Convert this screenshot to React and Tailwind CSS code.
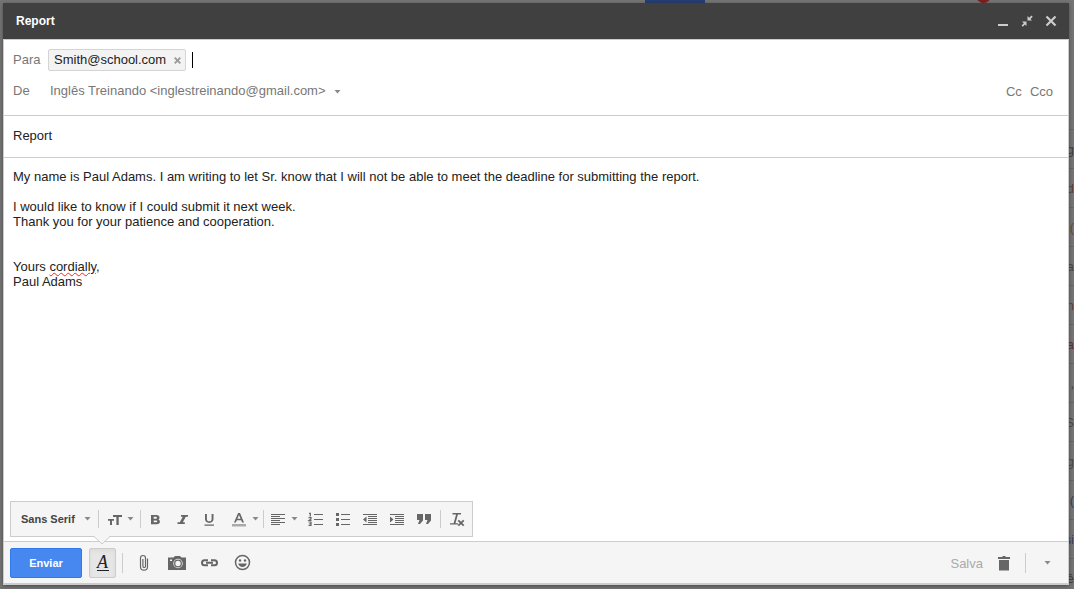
import { useState } from "react";

/**
 * Compose window — header, recipients, subject, message body,
 * formatting toolbar and the send bar, over a dimmed inbox.
 */

// Ends of the inbox rows that peek out beside the window.
const INBOX_ROWS = [
  { text: "g", color: "#3f3f3f" },
  { text: "d", color: "#5f4034" },
  { text: "(", color: "#6b4a35" },
  { text: "a", color: "#4a4a4a" },
  { text: "n", color: "#5f4034" },
  { text: "a", color: "#5a3434" },
  { text: ",", color: "#3f3f3f" },
  { text: "S", color: "#4a4a4a" },
  { text: "g", color: "#4f4a35" },
  { text: "(", color: "#3c3c5c" },
  { text: "si", color: "#3c3c5c" },
  { text: "cê", color: "#3f3f3f" },
];

const MESSAGE = [
  "My name is Paul Adams. I am writing to let Sr. know that I will not be able to meet the deadline for submitting the report.",
  "",
  "I would like to know if I could submit it next week.",
  "Thank you for your patience and cooperation.",
  "",
  "",
];

function Caret({ className = "" }) {
  return (
    <svg viewBox="0 0 7 4" className={`w-[7px] h-1 shrink-0 fill-[#888] ${className}`} aria-hidden="true">
      <path d="M.5 0h6L3.500 3.500z" />
    </svg>
  );
}

function Icon({ size = 18, children }) {
  return (
    <svg viewBox={`0 0 ${size} ${size}`} width={size} height={size} fill="currentColor" className="shrink-0" aria-hidden="true">
      {children}
    </svg>
  );
}

function Divider({ className = "h-4" }) {
  return <span className={`w-px shrink-0 bg-[#ccc] ${className}`} />;
}

function ToolButton({ label, className = "w-[27px]", children }) {
  return (
    <button type="button" aria-label={label} title={label} className={`h-full flex items-center justify-center shrink-0 cursor-pointer ${className}`}>
      {children}
    </button>
  );
}

const icons = {
  bold: <path fillRule="evenodd" d="M5 5h5.400c2 0 3.100 1 3.100 2.500 0 .9-.5 1.600-1.200 2 1 .4 1.600 1.100 1.600 2.200 0 1.600-1.200 2.500-3.200 2.500H5zm2.700 1.800v1.900h2c.8 0 1.200-.4 1.200-.95s-.4-.95-1.200-.95zm0 3.600v1.950h2.200c.9 0 1.300-.4 1.300-1s-.4-.95-1.300-.95z" />,
  italic: <path d="M8 5h7v1.800h-2.200l-3 5.400h2V14H4.500v-1.800h2.300l3-5.400H8z" />,
  underline: <path d="M5 4h1.900v5c0 1.500.8 2.300 2.350 2.300s2.350-.8 2.350-2.300V4h1.900v5.100c0 2.400-1.600 3.800-4.250 3.800S5 11.500 5 9.100zM4.500 14.500h9.500v1.300H4.500z" />,
  color: (
    <>
      <path fillRule="evenodd" d="M8.100 3h1.900l4 9.500h-1.900l-.9-2.300H6.800l-.9 2.300H4zm.9 2.100L7.400 8.700h3.200z" />
      <path fill="#aaa" d="M2 14h14v2.500H2z" />
    </>
  ),
  size: <path d="M7 5h9v2h-3.300v8h-2.300V7H7zM2 9h6v1.800H6V15H4v-4.200H2z" />,
  align: <path d="M2 4h14v1H2zM2 6h9v1H2zM2 8h14v1H2zM2 10h9v1H2zM2 12h14v1H2zM2 14h9v1H2z" />,
  numbered: (
    <>
      <path d="M7 4h9v1H7zM7 9h9v1H7zM7 14h9v1H7z" />
      <path fill="none" stroke="currentColor" strokeWidth="1.200" d="M2 3.300h1.300V6.500M1.500 7.700H4v1.200L2 10.500h2.500M1.500 12h2.500v3.300H1.500M2.500 13.600H4" />
    </>
  ),
  bulleted: <path d="M7 4h9v1H7zM7 9h9v1H7zM7 14h9v1H7zM2 3h3v3H2zM2 8h3v3H2zM2 13h3v3H2z" />,
  outdent: <path d="M2 4h14v1H2zM7 6h9v1H7zM7 8h9v1H7zM7 10h9v1H7zM7 12h9v1H7zM2 14h14v1H2zM2 9.500l3.500-3v6z" />,
  indent: <path d="M2 4h14v1H2zM7 6h9v1H7zM7 8h9v1H7zM7 10h9v1H7zM7 12h9v1H7zM2 14h14v1H2zM5.500 9.500L2 6.500v6z" />,
  quote: <path d="M2 4h6v6.500L5 14H3l1.500-4H2zM10 4h6v6.500L13 14h-2l1.500-4H10z" />,
  clear: (
    <>
      <path d="M4.500 3H13v1.500H9.900l-2.400 8.700H10v1.300H2v-1.300h3.600L8.100 4.500H4.500z" />
      <path fill="none" stroke="currentColor" strokeWidth="1.800" d="M10.300 10.300l5.400 5.400M15.700 10.300l-5.400 5.400" />
    </>
  ),
};

function FormatBar() {
  return (
    <div role="toolbar" aria-label="Formatação" className="relative flex items-center w-max h-9 bg-[#f5f5f5] border border-[#ccc] text-[#666]">
      <div className="relative w-[87px] flex items-center">
        <select aria-label="Fonte" className="appearance-none w-full h-6 pl-[10px] text-[11px] font-bold text-[#444] cursor-pointer">
          <option>Sans Serif</option>
          <option>Serif</option>
        </select>
        <Caret className="absolute right-[7px] pointer-events-none" />
      </div>
      <Divider className="h-[18px]" />
      <ToolButton label="Tamanho" className="w-[41px] gap-[3px]">
        <Icon>{icons.size}</Icon>
        <Caret />
      </ToolButton>
      <Divider className="h-[18px]" />
      <ToolButton label="Negrito"><Icon>{icons.bold}</Icon></ToolButton>
      <ToolButton label="Itálico"><Icon>{icons.italic}</Icon></ToolButton>
      <ToolButton label="Sublinhado"><Icon>{icons.underline}</Icon></ToolButton>
      <ToolButton label="Cor do texto" className="w-[41px] gap-1 pl-1">
        <Icon>{icons.color}</Icon>
        <Caret />
      </ToolButton>
      <Divider className="h-[18px]" />
      <ToolButton label="Alinhar" className="w-[38px] gap-1">
        <Icon>{icons.align}</Icon>
        <Caret />
      </ToolButton>
      <ToolButton label="Lista numerada"><Icon>{icons.numbered}</Icon></ToolButton>
      <ToolButton label="Lista com marcadores"><Icon>{icons.bulleted}</Icon></ToolButton>
      <ToolButton label="Menos recuo"><Icon>{icons.outdent}</Icon></ToolButton>
      <ToolButton label="Mais recuo"><Icon>{icons.indent}</Icon></ToolButton>
      <ToolButton label="Citação"><Icon>{icons.quote}</Icon></ToolButton>
      <Divider className="h-[18px] ml-[3px]" />
      <ToolButton label="Remover formatação" className="w-[31px]"><Icon>{icons.clear}</Icon></ToolButton>

      {/* pointer towards the formatting button */}
      <svg viewBox="0 0 16 9" className="absolute left-[83px] top-[34px] w-4 h-[9px] z-10" aria-hidden="true">
        <path fill="#f5f5f5" d="M0 0h16L8 8z" />
        <path fill="none" stroke="#ccc" d="M0 .5l8 7.500 8-7.500" />
      </svg>
    </div>
  );
}

function SendBar() {
  return (
    <div className="flex items-center h-[42px] shrink-0 pl-[6px] bg-[#f5f5f5] border-t border-[#ccc] text-[#666]">
      <button type="submit" className="w-[72px] h-[30px] pt-px rounded-xs border border-[#3079ed] bg-[#4788f0] text-white text-[11px] font-bold cursor-pointer">
        Enviar
      </button>
      <button type="button" aria-label="Opções de formatação" aria-pressed="true" className="ml-[7px] w-[27px] h-[30px] rounded-xs border border-[#ccc] bg-[#e6e6e6] shadow-inner flex items-center justify-center cursor-pointer">
        <span className="font-['Liberation_Serif',serif] italic text-lg leading-4 w-3 text-center text-[#222] border-b border-[#222]">A</span>
      </button>
      <Divider className="h-5 ml-[6px] mr-1" />
      <ToolButton label="Anexar arquivos" className="w-[33px]">
        <Icon size={20}>
          <path fill="none" stroke="currentColor" strokeWidth="1.200" d="M13.500 5.500v8.200a3.500 3.500 0 0 1-7 0V5a2.500 2.500 0 0 1 5 0v8.200a1.300 1.300 0 0 1-2.600 0V6" />
        </Icon>
      </ToolButton>
      <ToolButton label="Inserir foto" className="w-[33px]">
        <Icon size={20}>
          <path fillRule="evenodd" d="M1 4.500h5.500L8 3h5l1.500 1.500H19V17H1zm10 1.300a4.700 4.700 0 1 0 0 9.400 4.700 4.700 0 0 0 0-9.400zM3 6.500V8h2V6.500z" />
          <circle cx="11" cy="10.500" r="3.300" fill="none" stroke="currentColor" strokeWidth="1.300" />
        </Icon>
      </ToolButton>
      <ToolButton label="Inserir link" className="w-[33px]">
        <Icon size={20}>
          <path fill="none" stroke="currentColor" strokeWidth="2" d="M8 7.300H4.500a2.500 2.500 0 0 0 0 5H8M11 7.300h3.500a2.500 2.500 0 0 1 0 5H11M6 9.800h7" />
        </Icon>
      </ToolButton>
      <ToolButton label="Inserir emoticon" className="w-[33px]">
        <Icon size={20}>
          <circle cx="9.500" cy="9.500" r="7" fill="none" stroke="currentColor" strokeWidth="1.500" />
          <circle cx="7" cy="7.500" r="1.200" />
          <circle cx="12" cy="7.500" r="1.200" />
          <path d="M5.200 10.500h8.600c-.5 2.200-2.200 3.500-4.300 3.500s-3.800-1.300-4.300-3.500z" />
        </Icon>
      </ToolButton>

      <span className="ml-auto pt-px text-[#aaa]">Salva</span>
      <ToolButton label="Descartar rascunho" className="w-[42px]">
        <Icon>
          <path d="M3 3h4l1-1h2l1 1h4v2H3zM4 6h10v10.500H4z" />
        </Icon>
      </ToolButton>
      <Divider className="h-5" />
      <ToolButton label="Mais opções" className="w-[42px]">
        <Caret />
      </ToolButton>
    </div>
  );
}

export default function App() {
  const [to, setTo] = useState("");
  const [subject, setSubject] = useState("Report");

  return (
    <div className="relative h-screen overflow-hidden flex p-[3px] pr-[5px] pb-1 bg-[#757575] font-['Liberation_Sans',Arial,sans-serif] text-[13px] leading-[15px] text-[#222]">
      {/* dimmed inbox */}
      <div aria-hidden="true" className="absolute inset-0">
        <div className="absolute top-0 left-[645px] w-[60px] h-1 bg-[#263f73]" />
        <div className="absolute -top-3 right-[83px] size-[15px] rounded-full bg-[#7a2020]" />
        <div className="absolute top-[129px] right-0 w-6 text-right">
          {INBOX_ROWS.map((row, i) => (
            <div key={i} className="h-[39px] pt-3 border-t border-[#686868]" style={{ color: row.color }}>
              {row.text}
            </div>
          ))}
        </div>
      </div>

      <form onSubmit={(e) => e.preventDefault()} className="relative flex-1 min-w-0 flex flex-col bg-white shadow-[0_1px_4px_rgba(0,0,0,0.4)]">
        <header className="flex items-center h-9 shrink-0 pl-[13px] pr-[6px] bg-[#404040] text-[#ccc]">
          <h1 className="mr-auto text-[12px] font-bold text-white">Report</h1>
          <ToolButton label="Minimizar" className="w-6">
            <Icon size={12}><path d="M1 9h10v2H1z" /></Icon>
          </ToolButton>
          <ToolButton label="Sair da tela cheia" className="w-6">
            <Icon size={12}>
              <path d="M6.500 1v4.500H11L9.500 4l2.200-2.200-1.200-1.200L8.200 2.800zM1 6.500h4.500V11L4 9.500l-2.200 2.200-1.200-1.200L2.800 8.200z" />
            </Icon>
          </ToolButton>
          <ToolButton label="Fechar" className="w-6">
            <Icon size={12}><path fill="none" stroke="currentColor" strokeWidth="2.200" d="M1.500 1.500l9 9M10.500 1.500l-9 9" /></Icon>
          </ToolButton>
        </header>

        <div className="flex-1 min-h-0 flex flex-col border border-b-2 border-[#ccc]">
          <div className="pt-[9px] pb-3 pl-[9px] pr-[15px] text-[#777]">
            <div className="flex items-center">
              <label htmlFor="to" className="w-[35px] pb-[2px]">Para</label>
              <span className="flex items-center h-[22px] pl-[5px] pr-1 gap-2 rounded-xs border border-[#d4d4d4] bg-[#f3f3f3] text-[#222]">
                <span className="pb-[2px]">Smith@school.com</span>
                <button type="button" aria-label="Remover" className="text-[#999] cursor-pointer">
                  <svg viewBox="0 0 7 7" className="w-[7px] h-[7px]" fill="none" stroke="currentColor" strokeWidth="1.800" aria-hidden="true">
                    <path d="M.7.7l5.600 5.600M6.300.7L.7 6.300" />
                  </svg>
                </button>
              </span>
              <span className="ml-[6px] w-px h-4 bg-black" />
              <input id="to" value={to} onChange={(e) => setTo(e.target.value)} className="flex-1 min-w-0 h-5 outline-none text-[#222]" />
            </div>
            <div className="flex items-center h-6 mt-2">
              <label htmlFor="from" className="w-[37px] pb-[2px]">De</label>
              <select id="from" className="appearance-none field-sizing-content pb-[2px] cursor-pointer">
                <option>Inglês Treinando &lt;inglestreinando@gmail.com&gt;</option>
              </select>
              <Caret className="ml-2 mt-[2px]" />
              <button type="button" className="ml-auto cursor-pointer">Cc</button>
              <button type="button" className="ml-2 cursor-pointer">Cco</button>
            </div>
          </div>

          <input
            aria-label="Assunto"
            value={subject}
            onChange={(e) => setSubject(e.target.value)}
            className="h-[43px] shrink-0 px-[9px] pb-[2px] border-y border-[#ccc] outline-none"
          />

          <div role="textbox" aria-multiline="true" aria-label="Mensagem" tabIndex={0} className="flex-1 min-h-0 overflow-auto pt-[11px] px-[9px] outline-none">
            {MESSAGE.map((line, i) => (
              <p key={i} className="min-h-[15px]">{line}</p>
            ))}
            <p>
              Yours <span className="underline decoration-wavy decoration-1 decoration-[#f22]">cordially</span>,
            </p>
            <p>Paul Adams</p>
          </div>

          <div className="pl-[6px] pb-1 shrink-0">
            <FormatBar />
          </div>
          <SendBar />
        </div>
      </form>
    </div>
  );
}
